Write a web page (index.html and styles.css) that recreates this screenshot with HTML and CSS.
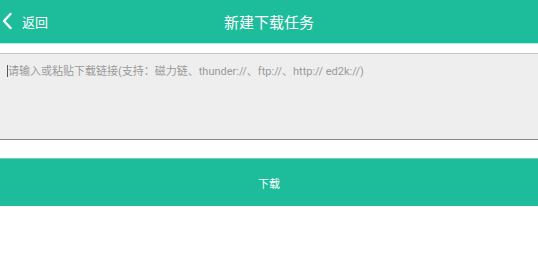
FILE: index.html
```html
<!DOCTYPE html>
<html lang="zh">
<head>
<meta charset="utf-8">
<link rel="stylesheet" href="styles.css">
</head>
<body>
<header class="topbar">
  <div class="back">
    <svg class="chev" width="12" height="18" viewBox="0 0 12 18"><path d="M9.5 2 L3 9 L9.5 16" fill="none" stroke="#fff" stroke-width="2.4" stroke-linecap="round" stroke-linejoin="round"/></svg>
    <span class="back-text">返回</span>
  </div>
  <div class="title">新建下载任务</div>
</header>
<div class="input-box">
  <div class="placeholder"><span class="caret"></span>请输入或粘贴下载链接(支持：磁力链、thunder://、ftp://、http:// ed2k://)</div>
</div>
<div class="btn">下载</div>
</body>
</html>
```
FILE: styles.css
```css
html, body {
  margin: 0;
  padding: 0;
  background: #fff;
  font-family: Roboto, "Noto Sans CJK SC", sans-serif;
}
.topbar {
  position: relative;
  height: 43px;
  background: #1dbc9b;
  border-bottom: 1px solid #b8ece0;
  display: flex;
  align-items: center;
  justify-content: center;
}
.back {
  position: absolute;
  left: 1px;
  top: 0;
  height: 43px;
  display: flex;
  align-items: center;
}
.chev { display: block; margin-top: -1px; }
.back-text {
  margin-left: 9px;
  color: #fff;
  font-size: 13px;
  font-family: "Noto Sans CJK SC", sans-serif;
}
.title {
  color: #fff;
  font-size: 15px;
  font-family: "Noto Sans CJK SC", sans-serif;
}
.input-box {
  margin-top: 9px;
  height: 74px;
  background: #eeeeee;
  border-top: 1px solid #c4c4c4;
  border-bottom: 1px solid #8a8a8a;
  padding: 11px 0 0 7px;
}
.placeholder {
  color: #9a9a9a;
  font-size: 11px;
  line-height: 14px;
  white-space: nowrap;
}
.caret {
  display: inline-block;
  width: 1px;
  height: 12px;
  background: #555;
  vertical-align: -2px;
}
.btn {
  margin-top: 18px;
  height: 47px;
  background: #1dbc9b;
  border-top: 1px solid #6fd3bd;
  color: #fff;
  font-size: 11px;
  font-family: "Noto Sans CJK SC", sans-serif;
  display: flex;
  align-items: center;
  justify-content: center;
}
```
